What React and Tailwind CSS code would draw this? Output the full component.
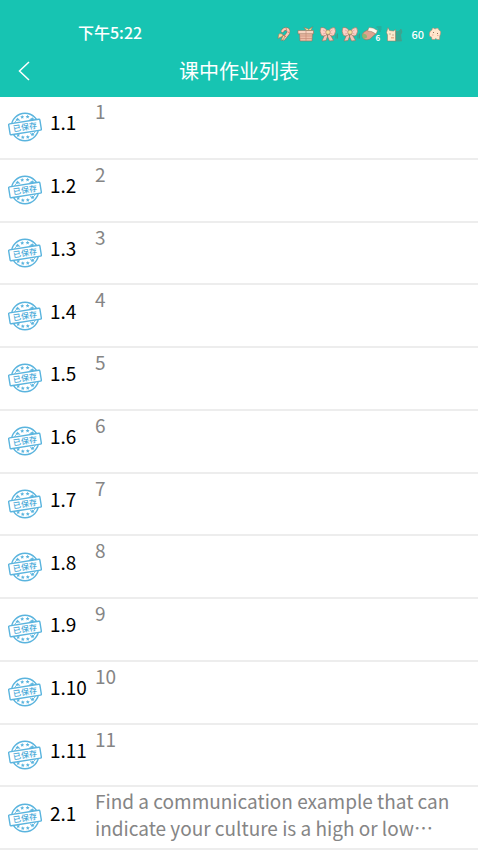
import React from "react";

const items = [
  ["1.1", "1"],
  ["1.2", "2"],
  ["1.3", "3"],
  ["1.4", "4"],
  ["1.5", "5"],
  ["1.6", "6"],
  ["1.7", "7"],
  ["1.8", "8"],
  ["1.9", "9"],
  ["1.10", "10"],
  ["1.11", "11"],
  ["2.1", "Find a communication example that can indicate your culture is a high or low…"],
];

function Star({ x, y }) {
  return (
    <path
      transform={`translate(${x} ${y})`}
      d="M0-2 .6-.7 2-.6 .9.4 1.200 1.800 0 1-1.200 1.800-.9.4-2-.6-.6-.7Z"
      fill="#5ab4de"
    />
  );
}

function SavedStamp() {
  return (
    <svg viewBox="0 0 34 30" className="h-[30px] w-[34px] shrink-0" role="img" aria-label="已保存">
      <circle cx="17" cy="15" r="13.700" fill="none" stroke="#5ab4de" strokeWidth="1.400" />
      <path d="M6.500 11Q10 4.500 12 9M27 8Q23.500 7 21.500 7.500M7.500 21Q10 20.500 12 21.500M27.500 19Q25 24 22 21" fill="none" stroke="#5ab4de" strokeWidth=".8" />
      <Star x={9.5} y={7.5} />
      <Star x={14.2} y={5} />
      <Star x={19.6} y={4.8} />
      <Star x={24.2} y={7} />
      <Star x={10.2} y={23.2} />
      <Star x={14.8} y={25.3} />
      <Star x={19.8} y={25} />
      <Star x={24.5} y={22.5} />
      <g transform="rotate(-9 17 15)">
        <rect x="1.200" y="9.500" width="31.600" height="11" rx="1" fill="#fff" stroke="#5ab4de" strokeWidth="1.400" />
        <text x="17" y="18" textAnchor="middle" fontSize="8" fill="#45a8d8" className="font-medium">
          已保存
        </text>
      </g>
    </svg>
  );
}

function CandyCane() {
  return (
    <svg viewBox="0 0 18 16" className="h-4 w-[18px]" aria-hidden="true">
      <path d="M8.500 13 13 7.500Q14.500 3.500 11.500 3 9 2.500 7.500 5" fill="none" stroke="#97725a" strokeWidth="3.400" strokeLinecap="round" />
      <path d="M8.500 13 13 7.500Q14.500 3.500 11.500 3 9 2.500 7.500 5" fill="none" stroke="#f8cdb9" strokeWidth="2.400" strokeLinecap="round" />
      <path d="m11 2 .5 2M12.500 6l2 .5M10 10l1.500 1.500" stroke="#d58574" />
      <path d="M8 8.500Q4 6.500 3.500 9L3 12.500 8 10Zm0 1L6 14.500l2.500-1L10 9.500Z" fill="#f5dba2" stroke="#97725a" strokeWidth=".6" />
    </svg>
  );
}

function Gift() {
  return (
    <svg viewBox="0 0 18 16" className="h-4 w-[18px]" aria-hidden="true">
      <path d="M2.500 7h13l-.5 8H3Z" fill="#edbda7" stroke="#97725a" strokeWidth=".6" />
      <path d="M1 4.500h15.500v3.300H1Z" fill="#f8d3c0" stroke="#97725a" strokeWidth=".6" />
      <path d="M9.500 4.500 7 1.500l3.500 1 1 1L15.500.800 14 4.500Z" fill="#efdf9f" stroke="#97725a" strokeWidth=".6" />
      <path d="M9 4.500V15M3 10h12M3 12.500h12" stroke="#c98d78" strokeWidth=".7" />
    </svg>
  );
}

function Bow() {
  return (
    <svg viewBox="0 0 18 16" className="h-4 w-[18px] overflow-visible" aria-hidden="true">
      <path d="M6 8 3 15l4-.5L9 9Zm5 0 3.500 6.500-4 .5L8 9Z" fill="#f4c5b8" stroke="#97725a" strokeWidth=".6" />
      <path d="M8.500 5.500Q6.500 1 2 1.500 0 5 2.500 9.500 7 11 8.500 7Zm1 0Q11.500 1 15.500 1.500 18 5 15 9.500 11 11 9.500 7Z" fill="#fbd0c5" stroke="#97725a" strokeWidth=".6" />
      <path d="m4 4 3 1.500M4 8l3-1M13.500 4 11 5.500M13.500 8 11 7" stroke="#d99a8e" strokeWidth=".6" />
      <circle cx="9" cy="6.200" r="2.200" fill="#f8df9f" stroke="#97725a" strokeWidth=".5" />
      <path d="M17 8.500v4M18.500 7.500v5" stroke="#478d78" strokeWidth=".7" />
    </svg>
  );
}

function Stocking() {
  return (
    <svg viewBox="0 0 18 16" className="h-4 w-[18px] overflow-visible" aria-hidden="true">
      <path d="M5.500 3.500 1 6Q-2 8.500 0 12q2 3 7 1l6-5.500Z" fill="#dfa38f" stroke="#97725a" strokeWidth=".6" />
      <path d="M0 7.500Q-1.500 11 1 13l3-1.500Q4.500 8 0 7.500Z" fill="#8fb574" />
      <path d="M6 1.500Q10 1 14.500 4.500L13 8Q8 4.500 4.500 5Z" fill="#fff8ec" stroke="#97725a" strokeWidth=".5" />
      <path d="M13.500 1h5M15 3h3.500M16 5h2" stroke="#3e907c" strokeWidth=".7" />
      <text x="12.500" y="15" fontSize="8" fill="#fff" className="font-bold">6</text>
    </svg>
  );
}

function BatteryDeer() {
  return (
    <svg viewBox="0 0 18 16" className="h-4 w-[18px] overflow-visible" aria-hidden="true">
      <path d="M10 5.500h3.500L16 3l1 3-1.500 3 1 6H10Z" fill="#32a993" stroke="#5b9482" strokeWidth=".6" />
      <path d="M3 1.500 4.500 4.500 8.500 5 10.500 3.500V15H2.500V9L1.500 6.500Z" fill="#fbe9cc" stroke="#97725a" strokeWidth=".5" />
      <path d="M5 7.500v1m3 0v1" stroke="#725744" strokeWidth=".8" />
      <path d="M6 11h3v1.500H6Z" fill="#eab18d" />
    </svg>
  );
}

function Bear() {
  return (
    <svg viewBox="0 0 14 14" className="size-3.5" aria-hidden="true">
      <path d="M4 3Q4-.5 7 2q3-2.500 4 1 2.500 1 1.500 4-1 1.500-1 5.500H9l-1-1-1.500 1H4L3.500 10Q.5 10 1.500 6 2 3.500 4 3Z" fill="#ffe6cc" stroke="#b5876b" strokeWidth=".6" />
      <path d="M5.500 5v1m4 0v1" stroke="#765641" strokeWidth=".8" />
      <path d="M4 8h1.500m3.500.5h1.500" stroke="#f1ac98" />
    </svg>
  );
}

export default function App() {
  return (
    <div className="flex min-h-screen flex-col bg-white font-['Noto_Sans_CJK_SC','Noto_Sans',sans-serif] text-black">
      <header className="bg-[#17c4b2] pt-5 text-white">
        <div className="flex h-6 items-center justify-between pr-9 pl-[78px]">
          <time className="text-base leading-6 font-medium">下午5:22</time>
          <div className="flex items-center pt-[3px]">
            <div className="flex items-center gap-1">
              <CandyCane />
              <Gift />
              <Bow />
              <Bow />
              <Stocking />
              <BatteryDeer />
            </div>
            <span className="pr-1 pl-2 text-[11px] leading-4 font-medium">60</span>
            <Bear />
          </div>
        </div>
        <div className="grid h-[53px] grid-cols-[48px_1fr_48px] items-center">
          <button type="button" aria-label="返回" className="flex h-12 items-center justify-center">
            <svg viewBox="0 0 12 20" className="h-5 w-3" fill="none" stroke="currentColor" strokeWidth="1.500" aria-hidden="true">
              <path d="M11 1 1.500 10 11 19" />
            </svg>
          </button>
          <h1 className="text-center text-xl leading-7">课中作业列表</h1>
        </div>
      </header>
      <ul className="grid flex-1 auto-rows-fr">
        {items.map(([number, title]) => (
          <li key={number} className="flex border-b-2 border-[#ededed] pr-6 pl-2">
            <div className="flex w-[87px] shrink-0 items-center gap-2">
              <SavedStamp />
              <span className="pb-2.5 text-[19px] leading-7">{number}</span>
            </div>
            <p lang="zh-CN" className="self-start text-[19px] leading-[27px] text-[#858585]">{title}</p>
          </li>
        ))}
      </ul>
    </div>
  );
}
